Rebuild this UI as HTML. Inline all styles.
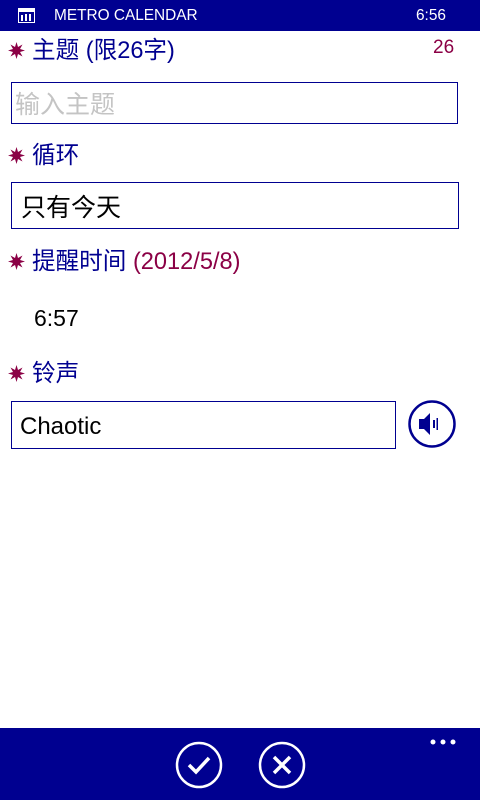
<!DOCTYPE html><html><head><meta charset="utf-8"><style>
body{margin:0;width:480px;height:800px;position:relative;background:#fff;font-family:"Liberation Sans","Noto Sans CJK SC",sans-serif;overflow:hidden}
.a{position:absolute;white-space:nowrap}
.lbl{font-size:23.6px;color:#000090;line-height:30px}
.mg{color:#8b0045}
.box{position:absolute;border:1px solid #000090;box-sizing:border-box}
.star{position:absolute;width:17px;height:17px}
</style></head><body>
<div class="a" style="left:0;top:0;width:480px;height:31px;background:#000090"></div>
<svg class="a" style="left:18px;top:8px" width="17" height="15"><rect x="0.5" y="0.5" width="16" height="14" fill="none" stroke="#fff"/><rect x="0" y="0" width="17" height="4" fill="#fff"/><rect x="3" y="7" width="2" height="6" fill="#fff"/><rect x="7" y="6" width="2" height="7" fill="#fff"/><rect x="11" y="6" width="2" height="7" fill="#fff"/></svg>
<div class="a" style="left:54px;top:6px;color:#fff;font-size:15.4px;line-height:20px">METRO CALENDAR</div>
<div class="a" style="left:416px;top:6px;color:#fff;font-size:15.4px;line-height:20px">6:56</div>

<svg width="0" height="0" style="position:absolute"><defs><polygon id="st" fill="#8b0045" points="8.5,0 10,5 14.5,2.5 12,7 17,8.5 12,10 14.5,14.5 10,12 8.5,17 7,12 2.5,14.5 5,10 0,8.5 5,7 2.5,2.5 7,5"/></defs></svg>

<svg class="star" style="left:8px;top:42px"><use href="#st"/></svg>
<div class="a lbl" style="left:32px;top:36px">主题 (限26字)</div>
<div class="a mg" style="left:433px;top:37px;font-size:19px">26</div>
<div class="box" style="left:11px;top:82px;width:447px;height:42px"></div>
<div class="a" style="left:15px;top:90px;font-size:25px;color:#c4c4c4;line-height:30px">输入主题</div>

<svg class="star" style="left:8px;top:147px"><use href="#st"/></svg>
<div class="a lbl" style="left:32px;top:141px">循环</div>
<div class="box" style="left:11px;top:182px;width:448px;height:47px"></div>
<div class="a" style="left:21px;top:193px;font-size:25px;color:#000;line-height:30px">只有今天</div>

<svg class="star" style="left:8px;top:253px"><use href="#st"/></svg>
<div class="a lbl" style="left:32px;top:247px">提醒时间 <span class="mg">(2012/5/8)</span></div>
<div class="a" style="left:34px;top:303px;font-size:23px;color:#000;line-height:30px">6:57</div>

<svg class="star" style="left:8px;top:365px"><use href="#st"/></svg>
<div class="a lbl" style="left:32px;top:359px">铃声</div>
<div class="box" style="left:11px;top:401px;width:385px;height:48px"></div>
<div class="a" style="left:20px;top:412px;font-size:24px;color:#000;line-height:30px">Chaotic</div>
<svg class="a" style="left:407px;top:399px" width="50" height="50"><circle cx="25" cy="25" r="22.5" fill="none" stroke="#000090" stroke-width="2.5"/><polygon points="12,20 17,20 23,14 23,36 17,30 12,30" fill="#000090"/><rect x="26" y="21" width="2" height="8" fill="#000090"/><rect x="29.5" y="19" width="1.5" height="12" fill="#000090"/></svg>

<div class="a" style="left:0;top:728px;width:480px;height:72px;background:#000090"></div>
<svg class="a" style="left:174px;top:740px" width="50" height="50"><circle cx="25" cy="25" r="22" fill="none" stroke="#fff" stroke-width="2.5"/><polyline points="15,25 22,32 35,18" fill="none" stroke="#fff" stroke-width="3.5"/></svg>
<svg class="a" style="left:257px;top:740px" width="50" height="50"><circle cx="25" cy="25" r="22" fill="none" stroke="#fff" stroke-width="2.5"/><path d="M17,17L33,33M33,17L17,33" stroke="#fff" stroke-width="3.5"/></svg>
<svg class="a" style="left:428px;top:738px" width="32" height="8"><circle cx="5" cy="4" r="2.5" fill="#fff"/><circle cx="15" cy="4" r="2.5" fill="#fff"/><circle cx="25" cy="4" r="2.5" fill="#fff"/></svg>
</body></html>
